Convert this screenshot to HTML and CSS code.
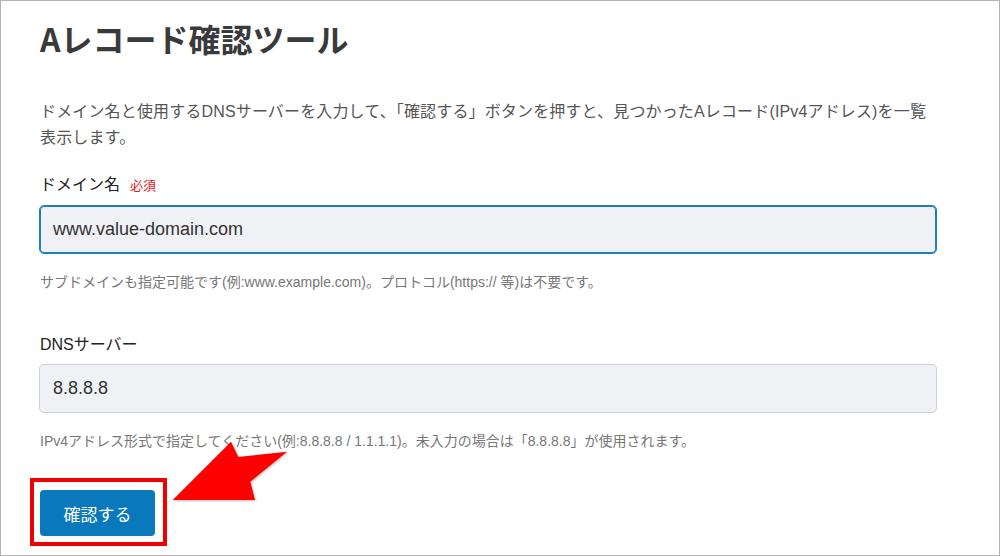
FILE: index.html
```html
<!DOCTYPE html>
<html lang="ja">
<head>
    <meta charset="UTF-8">
    <meta name="viewport" content="width=device-width, initial-scale=1.0">
    <title>Aレコード確認ツール</title>
    <link rel="stylesheet" href="styles.css">
</head>
<body>
    <div class="frame">
        <div class="tool">
            <h1 class="tool-title">Aレコード確認ツール</h1>
            <p class="lead">ドメイン名と使用するDNSサーバーを入力して、「確認する」ボタンを押すと、見つかったAレコード(IPv4アドレス)を一覧表示します。</p>

            <div class="field">
                <label class="field-label" for="txtDomain">ドメイン名<span class="req">必須</span></label>
                <input id="txtDomain" class="field-input focus" type="text" value="www.value-domain.com">
                <p class="field-help">サブドメインも指定可能です(例:www.example.com)。プロトコル(https:// 等)は不要です。</p>
            </div>

            <div class="field second">
                <label class="field-label" for="txtDns">DNSサーバー</label>
                <input id="txtDns" class="field-input" type="text" value="8.8.8.8">
                <p class="field-help">IPv4アドレス形式で指定してください(例:8.8.8.8 / 1.1.1.1)。未入力の場合は「8.8.8.8」が使用されます。</p>
            </div>

            <div class="actions">
                <span class="btn-wrap">
                    <button class="btn-check" type="button">確認する</button>
                    <span class="mark-box"></span>
                </span>
            </div>
        </div>

        <!-- 注釈の矢印 -->
        <svg class="mark-arrow" width="140" height="80" viewBox="0 0 140 80">
            <polygon points="11.7,69 70,10.7 77.3,26 126,20.7 89.3,50.7 94,69" fill="#ff0000"/>
        </svg>
    </div>
</body>
</html>
```

FILE: styles.css
```css
*{
    margin: 0;
    padding: 0;
    box-sizing: border-box;
}
body{
    font-family: "Liberation Sans", "Noto Sans CJK JP", sans-serif;
    background: #fff;
}

.frame{
    position: relative;
    width: 1000px;
    height: 556px;
    border: 1px solid #b3b3b3;
    overflow: hidden;
}
.tool{
    padding: 17px 62px 0 38px;
}
.tool-title{
    font-family: "Noto Sans CJK JP", sans-serif;
    font-size: 32px;
    line-height: 40px;
    font-weight: bold;
    color: #3a3a3a;
    padding-left: 1px;
}
.lead{
    margin-top: 41px;
    padding-left: 1px;
    font-size: 16px;
    line-height: 26px;
    letter-spacing: 0.15px;
    color: #555;
}

.field{
    margin-top: 22px;
}
.field.second{
    margin-top: 41px;
}
.field-label{
    display: block;
    padding-left: 1px;
    font-size: 16px;
    line-height: 24px;
    color: #222;
}
.field-label .req{
    margin-left: 10px;
    font-size: 13px;
    color: #e0201b;
}
.field-input{
    display: block;
    width: 100%;
    height: 49px;
    margin-top: 7px;
    padding: 0 13px;
    border: 1px solid #cfcfd3;
    border-radius: 5px;
    background: #f0f1f5;
    font-family: "Liberation Sans", sans-serif;
    font-size: 18px;
    color: #333;
    outline: none;
}
.field-input.focus{
    border-color: #1f7cc0;
    box-shadow: inset 0 0 0 1px #1f7cc0;
}
.field-help{
    margin-top: 18px;
    padding-left: 1px;
    font-size: 14px;
    line-height: 20px;
    color: #777;
}

.actions{
    margin-top: 39px;
    padding-left: 1px;
}
.btn-wrap{
    position: relative;
    display: inline-block;
}
.btn-check{
    display: block;
    width: 115px;
    height: 46px;
    border: 0;
    border-radius: 4px;
    background: #0a79bc;
    color: #fff;
    font-family: "Noto Sans CJK JP", sans-serif;
    font-size: 17px;
}

/* 注釈(赤枠と矢印) */
.mark-box{
    position: absolute;
    top: -12px;
    left: -10px;
    right: -12px;
    bottom: -10px;
    border: 4px solid #f00000;
}
.mark-arrow{
    position: absolute;
    left: 160px;
    top: 430px;
    filter: drop-shadow(1px 1px 1px rgba(0, 0, 0, 0.25));
}
```
